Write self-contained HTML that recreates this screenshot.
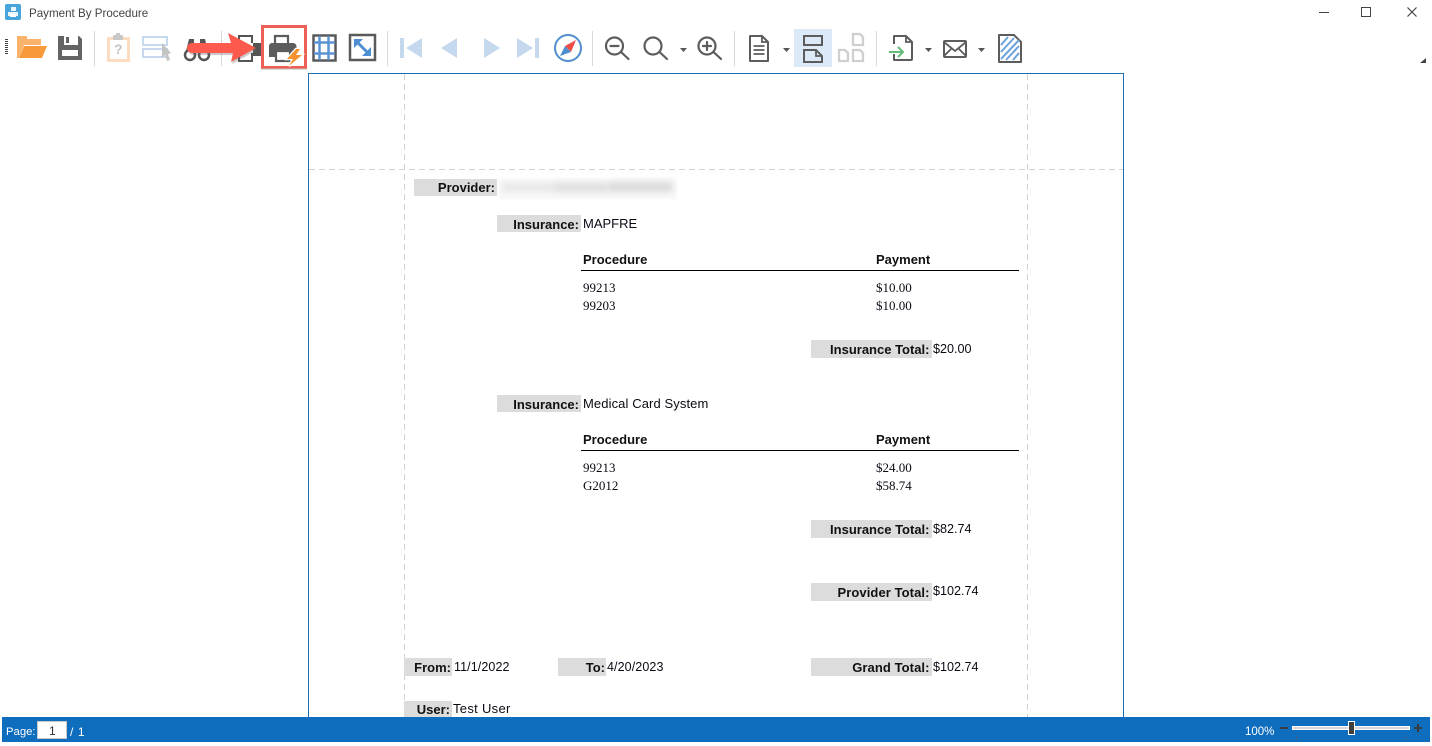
<!DOCTYPE html>
<html><head><meta charset="utf-8"><style>
html,body{margin:0;padding:0;background:#fff;width:1432px;height:746px;overflow:hidden}
body{position:relative;font-family:"Liberation Sans",sans-serif;color:#000}
.a{position:absolute;white-space:nowrap}
.box{position:absolute;background:#dcdcdc;height:17px}
.l{position:absolute;font-weight:bold;font-size:13px;line-height:17px;text-align:right;white-space:nowrap;color:#111}
.v{position:absolute;font-size:13px;line-height:16px;white-space:nowrap;color:#0a0a14}
.m{position:absolute;font-size:12.6px;line-height:16px;white-space:nowrap;color:#0a0a14}
.h{position:absolute;font-weight:bold;font-size:13px;line-height:16px;white-space:nowrap;color:#111}
.t{position:absolute;font-family:"Liberation Serif",serif;font-size:13px;line-height:16px;white-space:nowrap;color:#0a0a14}
.sep{position:absolute;top:31px;width:1px;height:35px;background:#d9d9d9}
.dv{position:absolute;top:74px;width:1px;height:643px;background:repeating-linear-gradient(to bottom,#d2d2d2 0 6px,transparent 6px 10px)}
svg{position:absolute;left:0;top:0}
</style></head><body>

<!-- report page -->
<div class="a" style="left:308px;top:73px;width:814px;height:644px;border:1px solid #1c6fb5;border-bottom:0"></div>
<div class="dv" style="left:404px"></div>
<div class="dv" style="left:1027px"></div>
<div class="a" style="left:309px;top:169px;width:814px;height:1px;background:repeating-linear-gradient(to right,#d2d2d2 0 6px,transparent 6px 10px)"></div>

<div class="box" style="left:414px;top:179px;width:83px"></div>
<div class="l" style="left:414px;width:81px;top:179px">Provider:</div>
<div class="a" style="left:499px;top:178px;width:178px;height:21px;background:#f7f7f7;filter:blur(1.5px)"></div>
<div class="a" style="left:503px;top:184px;width:50px;height:7px;background:#e6e6e6;filter:blur(3px)"></div>
<div class="a" style="left:553px;top:183px;width:55px;height:9px;background:#e0e0e0;filter:blur(3px)"></div>
<div class="a" style="left:608px;top:182px;width:64px;height:10px;background:#dcdcdc;filter:blur(3px)"></div>

<div class="box" style="left:497px;top:215px;width:84px"></div>
<div class="l" style="left:497px;width:82px;top:216px">Insurance:</div>
<div class="v" style="left:583px;top:216px">MAPFRE</div>
<div class="h" style="left:583px;top:252px">Procedure</div>
<div class="h" style="left:876px;top:252px">Payment</div>
<div class="a" style="left:581px;top:270px;width:438px;height:1px;background:#000"></div>
<div class="t" style="left:583px;top:280px">99213</div><div class="t" style="left:876px;top:280px">$10.00</div>
<div class="t" style="left:583px;top:298px">99203</div><div class="t" style="left:876px;top:298px">$10.00</div>
<div class="box" style="left:811px;top:340px;width:121px;height:18px"></div>
<div class="l" style="left:811px;width:118.5px;top:341px">Insurance Total:</div>
<div class="m" style="left:933px;top:341px">$20.00</div>

<div class="box" style="left:497px;top:395px;width:84px"></div>
<div class="l" style="left:497px;width:82px;top:396px">Insurance:</div>
<div class="v" style="left:583px;top:396px;letter-spacing:.1px">Medical Card System</div>
<div class="h" style="left:583px;top:432px">Procedure</div>
<div class="h" style="left:876px;top:432px">Payment</div>
<div class="a" style="left:581px;top:450px;width:438px;height:1px;background:#000"></div>
<div class="t" style="left:583px;top:460px">99213</div><div class="t" style="left:876px;top:460px">$24.00</div>
<div class="t" style="left:583px;top:478px">G2012</div><div class="t" style="left:876px;top:478px">$58.74</div>
<div class="box" style="left:811px;top:520px;width:121px;height:18px"></div>
<div class="l" style="left:811px;width:118.5px;top:521px">Insurance Total:</div>
<div class="m" style="left:933px;top:521px">$82.74</div>

<div class="box" style="left:811px;top:583px;width:121px;height:18px"></div>
<div class="l" style="left:811px;width:118.5px;top:584px;letter-spacing:.08px">Provider Total:</div>
<div class="m" style="left:933px;top:583px">$102.74</div>

<div class="box" style="left:404px;top:658px;width:48px;height:18px"></div>
<div class="l" style="left:404px;width:47px;top:659px">From:</div>
<div class="v" style="left:454px;top:659px;font-size:12.5px;letter-spacing:.1px">11/1/2022</div>
<div class="box" style="left:558px;top:658px;width:48px;height:18px"></div>
<div class="l" style="left:558px;width:47px;top:659px">To:</div>
<div class="v" style="left:607px;top:659px;font-size:12.5px;letter-spacing:.1px">4/20/2023</div>
<div class="box" style="left:811px;top:658px;width:121px;height:18px"></div>
<div class="l" style="left:811px;width:118.5px;top:659px;letter-spacing:.08px">Grand Total:</div>
<div class="m" style="left:933px;top:659px">$102.74</div>
<div class="box" style="left:404px;top:701px;width:48px;height:16px"></div>
<div class="l" style="left:404px;width:46px;top:701px">User:</div>
<div class="v" style="left:453px;top:701px;letter-spacing:.3px">Test User</div>

<!-- title bar -->
<div class="a" style="left:29px;top:6px;font-size:11.6px;line-height:16px;color:#444">Payment By Procedure</div>

<!-- toolbar separators -->
<div class="sep" style="left:94px"></div>
<div class="sep" style="left:221px"></div>
<div class="sep" style="left:387px"></div>
<div class="sep" style="left:592px"></div>
<div class="sep" style="left:734px"></div>
<div class="sep" style="left:876px"></div>
<div class="a" style="left:794px;top:29px;width:38px;height:38px;background:#dceaf7"></div>

<!-- icons -->
<svg width="1432" height="746" viewBox="0 0 1432 746" fill="none">
<!-- app icon -->
<rect x="5" y="4" width="16" height="16" rx="2" fill="#48a5dc"/>
<path d="M11 7h5v4h-5zM8 12h10v4H8z" fill="#eaf4fb"/><path d="M10 14h6v3h-6z" fill="#fff"/>
<!-- window controls -->
<path d="M1319 12.5h10" stroke="#444"/>
<rect x="1361.5" y="7.5" width="9" height="9" stroke="#444"/>
<path d="M1407.5 7.5l9 9M1416.5 7.5l-9 9" stroke="#444" stroke-width="1.2"/>
<path d="M1426 58v5h-6z" fill="#444"/>
<!-- gripper -->
<path d="M5 39.5h3M5 41.5h3M5 43.5h3M5 45.5h3M5 47.5h3M5 49.5h3M5 51.5h3M5 53.5h3" stroke="#444"/>
<!-- open -->
<path d="M17 36h10v3h14v6H24l-5 13h-2z" fill="#fbb36c"/>
<path d="M24 46h23l-5 12H19z" fill="#f89a3b"/>
<!-- save -->
<path d="M58 36h21l3 3v21H58z" fill="#646464"/>
<rect x="64" y="36" width="14" height="9" fill="#fff"/><rect x="66" y="37" width="3" height="6" fill="#646464"/>
<rect x="62" y="50" width="16" height="6" fill="#fff"/>
<!-- clipboard -->
<rect x="108.500" y="38.500" width="20" height="22" fill="none" stroke="#fddcc0" stroke-width="3"/>
<rect x="113" y="35" width="10" height="5" rx="1" fill="#c8c8c8"/><rect x="116" y="33" width="4" height="4" fill="#c8c8c8"/>
<!-- select tool -->
<rect x="143" y="37" width="24" height="8" stroke="#c6d9ee" stroke-width="2"/>
<rect x="143" y="49" width="24" height="8" stroke="#c6d9ee" stroke-width="2"/>
<path d="M162 43l9 10-3 1 2 6-3 1-2-6-3 3z" fill="#c4c4c4"/>
<!-- binoculars -->
<circle cx="190" cy="55" r="5" stroke="#555" stroke-width="2.5"/><circle cx="204" cy="55" r="5" stroke="#555" stroke-width="2.5"/>
<path d="M186 51l3-12h5v10h6V39h5l3 12" fill="#555"/>
<!-- print behind arrow -->
<path d="M239 43v-7h13v7M239 53v8h13v-8" stroke="#555" stroke-width="2"/>
<rect x="253" y="43" width="8" height="13" fill="#555"/><rect x="235" y="44" width="6" height="12" fill="#555"/>
<!-- highlight -->
<rect x="262.500" y="26.500" width="43" height="41" fill="#fff" stroke="#ee6055" stroke-width="3"/>
<path d="M262 69h44" stroke="#bbb" stroke-width="1"/>
<!-- quick print -->
<path d="M275 44v-8h13v8" stroke="#5c5c5c" stroke-width="2.2"/>
<path d="M272 43h21a3.500 3.500 0 0 1 3.500 3.500V57H269V46a3 3 0 0 1 3-3z" fill="#5c5c5c"/>
<path d="M276 51h14v10h-14z" fill="#fff" stroke="#5c5c5c" stroke-width="2.200"/>
<path d="M296 49L287 59H293L289 66L302 55H296L300 49Z" fill="#fff" stroke="#fff" stroke-width="2.500"/>
<path d="M296 49L287 59H293L289 66L302 55H296L300 49Z" fill="#f59331"/>
<!-- arrow -->
<path d="M192 43H231L228 33L256 48L231 62L233 53H192a5 5 0 0 1 0-10z" fill="#666" opacity=".35" transform="translate(1 2)"/>
<path d="M192 43H231L228 33L256 48L231 62L233 53H192a5 5 0 0 1 0-10z" fill="#fb5a4d"/>
<!-- grid -->
<rect x="313.500" y="35.500" width="22" height="25" stroke="#5a5a5a" stroke-width="2.500"/>
<path d="M319.500 36v24M328.500 36v24M314 42.500h21M314 53.500h21" stroke="#5b94d3" stroke-width="2.500"/>
<!-- fit -->
<rect x="350" y="35" width="25" height="25" stroke="#5a5a5a" stroke-width="2.500"/>
<path d="M358 43l9 9" stroke="#4e8fd3" stroke-width="3"/><path d="M354 39h9l-9 9zM371 56h-9l9-9z" fill="#4e8fd3"/>
<!-- nav -->
<g fill="#c5d9ee"><rect x="400" y="38" width="4" height="20"/><path d="M422 38v20l-16-10zM457 38v20l-16-10zM484 38v20l16-10zM517 38v20l16-10z"/><rect x="535" y="38" width="4" height="20"/></g>
<!-- compass -->
<circle cx="568" cy="48" r="13" stroke="#4f8fcf" stroke-width="2" fill="#fff"/>
<path d="M576 40l-11 6 6 6z" fill="#ee4c46"/><path d="M560 56l5-10 6 6z" fill="#4f8fcf"/>
<!-- zooms -->
<g stroke="#5c5c5c" stroke-width="2.200" stroke-linecap="round">
<circle cx="614.500" cy="46" r="8.500"/><path d="M621 52l7.500 7M610.500 46h8"/>
<circle cx="653" cy="46" r="8.500"/><path d="M659.500 52l7.500 7"/>
<circle cx="707" cy="46" r="8.500"/><path d="M713.500 52l7.500 7M703 46h8M707 42v8"/>
</g>
<g fill="#555"><path d="M680 48h7l-3.500 4zM783 48h7l-3.500 4zM925 48h7l-3.500 4zM978 48h7l-3.500 4z"/></g>
<!-- page -->
<path d="M750 36h12l6 6v19h-18z" stroke="#5c5c5c" stroke-width="2" stroke-linejoin="round"/>
<path d="M762 36v6h6M753.500 46h11M753.500 50h11M753.500 54h11" stroke="#5c5c5c" stroke-width="1.800"/>
<!-- single/continuous page -->
<path d="M804 36h18v9h-18z" stroke="#5c5c5c" stroke-width="2"/>
<path d="M804 50h12l6 6v6h-18z" stroke="#5c5c5c" stroke-width="2"/><path d="M816 50v6h6" stroke="#5c5c5c" stroke-width="1.800"/>
<!-- facing pages -->
<g stroke="#cfcfcf" stroke-width="2.300"><path d="M853 34h7l3 3v8h-10zM839 50h6l3 3v8h-9zM853 50h7l3 3v8h-10z"/></g>
<!-- export -->
<path d="M894 44v-8h12l6 6v17a1 1 0 0 1-1 1h-17v-6" stroke="#5c5c5c" stroke-width="2" stroke-linejoin="round"/>
<path d="M906 36v6h6" stroke="#5c5c5c" stroke-width="1.800"/>
<path d="M889 52h14M898 47l5 5-5 5" stroke="#66bb7a" stroke-width="2"/>
<!-- mail -->
<rect x="944" y="41" width="22" height="16" rx="1" stroke="#5c5c5c" stroke-width="2"/>
<path d="M944 42l11 9 11-9M944 56l8-8M966 56l-8-8" stroke="#5c5c5c" stroke-width="1.800"/>
<!-- watermark page -->
<path d="M999 35h15l7 7v20h-22z" stroke="#5c5c5c" stroke-width="2" stroke-linejoin="round" fill="#fff"/>
<path d="M1001 45l7-8M1001 52l13-14M1001 59l18-19M1006 60l13-14M1013 60l6-7" stroke="#6ba3dc" stroke-width="2"/>
<!-- status bar -->
<rect x="2" y="717" width="1428" height="25" fill="#0f6dbd"/>
<rect x="37.500" y="721.500" width="29" height="17" fill="#fff" stroke="#c8c8c8"/>
<path d="M1280 728h8" stroke="#3c3c3c" stroke-width="2"/>
<rect x="1292.500" y="726.500" width="117" height="3" fill="#d8d8d8" stroke="#fff"/>
<rect x="1348.500" y="721.500" width="6" height="13" fill="#404040" stroke="#fff"/>
<path d="M1414 728h8M1418 724v8" stroke="#3c3c3c" stroke-width="2"/>
<path d="M1296.500 736v3M1406.500 736v3" stroke="#3f5f80"/>
</svg>

<!-- clipboard question -->
<div class="a" style="left:114px;top:41px;font-size:14px;font-weight:bold;color:#c4c4c4;line-height:16px">?</div>

<!-- status bar text -->
<div class="a" style="left:6px;top:724px;font-size:11.3px;line-height:16px;color:#fff">Page:</div>
<div class="a" style="left:49px;top:723px;font-size:12px;line-height:16px;color:#333">1</div>
<div class="a" style="left:70px;top:724px;font-size:12px;line-height:16px;color:#fff;letter-spacing:.6px">/ 1</div>
<div class="a" style="left:1245px;top:724px;font-size:11.5px;line-height:16px;color:#fff">100%</div>
</body></html>
